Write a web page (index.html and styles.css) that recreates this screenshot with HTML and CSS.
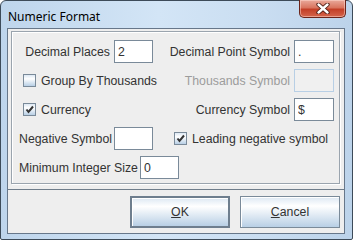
FILE: index.html
```html
<!DOCTYPE html>
<html lang="en">
<head>
  <meta charset="UTF-8">
  <title>Numeric Format</title>
  <link rel="stylesheet" href="styles.css">
</head>
<body>

  <div class="window">
    <div class="titlebar">
      <span class="title">Numeric Format</span>
      <button class="close" aria-label="Close">
        <svg width="14" height="11" viewBox="0 0 14 11">
          <path d="M2.5 1.5 L11.5 9.5 M11.5 1.5 L2.5 9.5" stroke="#4a1a12" stroke-width="4.2" stroke-linecap="round"/>
          <path d="M2.5 1.5 L11.5 9.5 M11.5 1.5 L2.5 9.5" stroke="#ffffff" stroke-width="2.4" stroke-linecap="round"/>
        </svg>
      </button>
    </div>

    <div class="client">
      <div class="panel">
        <div class="form-grid">
          <span class="label">Decimal Places</span>
          <input class="field" type="text" value="2">
          <span class="label">Decimal Point Symbol</span>
          <input class="field" type="text" value=".">

          <label class="check span-left">
            <span class="box"></span>
            Group By Thousands
          </label>
          <span class="label disabled">Thousands Symbol</span>
          <input class="field off" type="text" readonly>

          <label class="check span-left">
            <span class="box">
              <svg width="9" height="9" viewBox="0 0 9 9"><path d="M1.5 4.5 L3.5 7 L8 1.5" fill="none" stroke="#333" stroke-width="2"/></svg>
            </span>
            Currency
          </label>
          <span class="label">Currency Symbol</span>
          <input class="field" type="text" value="$">

          <span class="label">Negative Symbol</span>
          <input class="field" type="text">
          <label class="check span-right">
            <span class="box">
              <svg width="9" height="9" viewBox="0 0 9 9"><path d="M1.5 4.5 L3.5 7 L8 1.5" fill="none" stroke="#333" stroke-width="2"/></svg>
            </span>
            Leading negative symbol
          </label>

          <div class="row-full">
            <span>Minimum Integer Size</span>
            <input class="field" type="text" value="0">
          </div>
        </div>
      </div>

      <div class="buttons">
        <button class="btn default"><u>O</u>K</button>
        <button class="btn"><u>C</u>ancel</button>
      </div>
    </div>
  </div>

</body>
</html>
```

FILE: styles.css
```css
body, html {
  margin: 0;
  padding: 0;
  background: #ffffff;
}

.window {
  box-sizing: border-box;
  width: 353px;
  height: 240px;
  border: 1px solid #3d4b59;
  border-radius: 6px 6px 2px 2px;
  background: linear-gradient(to right, #bed5ec, #d3e5f6 45%, #c9ddf1 75%, #bcd3ea);
  display: flex;
  flex-direction: column;
  font-family: "Liberation Sans", Arial, sans-serif;
  font-size: 12.3px;
  color: #333333;
}

.titlebar {
  height: 27px;
  display: flex;
  align-items: flex-start;
}

.title {
  flex: 1;
  padding: 7px 0 0 7px;
  font-family: "Noto Sans", sans-serif;
  font-size: 12px;
  color: #000000;
}

.close {
  width: 47px;
  height: 18px;
  margin: -1px 6px 0 0;
  padding: 0;
  border: 1px solid #6b241a;
  border-top: none;
  border-radius: 0 0 5px 5px;
  background: linear-gradient(to bottom, #e9a99b, #d9755f 45%, #c33f27 55%, #d4654c);
  box-shadow: inset 0 0 0 1px rgba(255, 220, 210, 0.5);
  display: flex;
  align-items: center;
  justify-content: center;
}

.client {
  flex: 1;
  margin: 0 7px 5px 6px;
  border: 1px solid #67778a;
  background: #eeeeee;
  display: flex;
  flex-direction: column;
}

.panel {
  margin: 2px 4px 0 3px;
  border: 1px solid #9aa4ae;
  box-shadow: inset 1px 1px 0 #ffffff, 1px 1px 0 #ffffff;
  padding: 8px 5px 4px 7px;
}

.form-grid {
  display: grid;
  grid-template-columns: 91px 39px 1fr 40px;
  grid-template-rows: repeat(5, 23px);
  column-gap: 4px;
  row-gap: 6px;
  align-items: center;
}

.label {
  text-align: right;
  white-space: nowrap;
}

.label.disabled {
  color: #9c9c9c;
}

.field {
  box-sizing: border-box;
  width: 100%;
  height: 23px;
  margin: 0;
  padding: 0 3px;
  border: 1px solid #7a8a99;
  background: #ffffff;
  font-family: inherit;
  font-size: 12.3px;
  color: #333333;
  outline: none;
}

.field.off {
  border-color: #b8cfe5;
  background: #f0f0f0;
}

.check {
  display: flex;
  align-items: center;
  gap: 5px;
  white-space: nowrap;
}

.span-left {
  grid-column: 1 / 3;
  padding-left: 4px;
}

.span-right {
  grid-column: 3 / 5;
  padding-left: 17px;
}

.box {
  flex: none;
  box-sizing: border-box;
  width: 13px;
  height: 13px;
  border: 1px solid #7a8a99;
  background: linear-gradient(to bottom, #dde8f3, #ffffff 35%, #b8cfe5);
  display: flex;
  align-items: center;
  justify-content: center;
}

.row-full {
  grid-column: 1 / -1;
  display: flex;
  align-items: center;
  gap: 2px;
}

.row-full .field {
  flex: none;
  width: 39px;
}

.buttons {
  margin-top: 5px;
  border-top: 1px solid #6f7d8b;
  padding: 6px 4px 5px 0;
  display: flex;
  justify-content: flex-end;
  gap: 10px;
}

.btn {
  box-sizing: border-box;
  width: 100px;
  height: 32px;
  margin: 0;
  padding: 0;
  border: 1px solid #7a8a99;
  box-shadow: inset 1px 1px 0 #ffffff;
  background: linear-gradient(to bottom, #dde8f3, #ffffff 30%, #b8cfe5);
  font-family: inherit;
  font-size: 12.3px;
  color: #333333;
}

.btn.default {
  border: 2px solid #6e7e8e;
}
```
